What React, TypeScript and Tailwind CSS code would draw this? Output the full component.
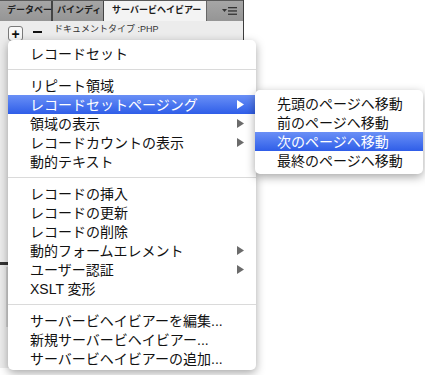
import React from "react";

type Item = { label: string; arrow?: boolean; active?: boolean } | "sep";

const mainItems: Item[] = [
  { label: "レコードセット" },
  "sep",
  { label: "リピート領域" },
  { label: "レコードセットページング", arrow: true, active: true },
  { label: "領域の表示", arrow: true },
  { label: "レコードカウントの表示", arrow: true },
  { label: "動的テキスト" },
  "sep",
  { label: "レコードの挿入" },
  { label: "レコードの更新" },
  { label: "レコードの削除" },
  { label: "動的フォームエレメント", arrow: true },
  { label: "ユーザー認証", arrow: true },
  { label: "XSLT 変形" },
  "sep",
  { label: "サーバービヘイビアーを編集..." },
  { label: "新規サーバービヘイビアー..." },
  { label: "サーバービヘイビアーの追加..." },
];

const subItems = [
  { label: "先頭のページへ移動" },
  { label: "前のページへ移動" },
  { label: "次のページへ移動", active: true },
  { label: "最終のページへ移動" },
];

function Arrow({ white }: { white?: boolean }) {
  return (
    <svg width="7" height="9" viewBox="0 0 7 9" className="shrink-0">
      <polygon points="0,0 7,4.5 0,9" fill={white ? "#ffffff" : "#6b6b6b"} />
    </svg>
  );
}

function Row({ label, arrow, active }: { label: string; arrow?: boolean; active?: boolean }) {
  return (
    <div
      className={
        "flex h-[19px] items-center justify-between pl-[22px] pr-[12px] text-[14px] leading-none " +
        (active
          ? "bg-gradient-to-b from-[#6a8ff6] to-[#2f5de8] text-white"
          : "text-[#111]")
      }
    >
      <span>{label}</span>
      {arrow && <Arrow white={active} />}
    </div>
  );
}

export default function App() {
  return (
    <div className="relative w-[425px] h-[375px] overflow-hidden bg-white font-['Liberation_Sans','Noto_Sans_CJK_JP',sans-serif]">
      {/* Panel behind the menu */}
      <div className="flex h-[368px] w-[244px] flex-col border-r border-[#3d3d3d] bg-[#ececec]">
        {/* Tabs */}
        <div className="flex h-[21px] items-stretch border-t border-[#5a5a5a] bg-gradient-to-b from-[#a6a6a6] to-[#959595] text-[9px] font-semibold text-[#222]">
          <div className="flex w-[53px] items-center whitespace-nowrap border-r-2 border-[#444] pl-[7px]">
            データベー
          </div>
          <div className="flex w-[51px] items-center whitespace-nowrap border-r border-[#444] pl-[4px]">
            バインディ
          </div>
          <div className="flex w-[102px] items-center whitespace-nowrap bg-[#f3f3f3] pl-[8px] text-[#1a1a1a]">
            サーバービヘイビアー
          </div>
          <div className="flex flex-1 items-center justify-end border-l border-[#666] pr-[5px]">
            <svg width="16" height="10" viewBox="0 0 16 10">
              <polygon points="0,3 5,3 2.5,6" fill="#333" />
              <rect x="6" y="1" width="9" height="1.3" fill="#333" />
              <rect x="6" y="4.3" width="9" height="1.3" fill="#333" />
              <rect x="6" y="7.6" width="9" height="1.3" fill="#333" />
            </svg>
          </div>
        </div>
        {/* Toolbar */}
        <div className="flex h-[19px] items-start pl-[8px] pt-[5px]">
          <div className="flex h-[15px] w-[15px] items-center justify-center rounded-[3px] border border-[#7a7a7a] bg-[#f8f8f8] text-[14px] font-bold leading-none text-[#111]">
            +
          </div>
          <div className="ml-[10px] mt-[5px] h-[2px] w-[9px] bg-[#111]" />
          <div className="ml-[12px] mt-[-3px] text-[9px] text-[#333]">ドキュメントタイプ :PHP</div>
        </div>
        <div className="mt-[222px] h-[3px] w-full bg-[#333]" />
        <div className="ml-[6px] mt-[2px] h-[60px] w-[2px] bg-[#d0d0d0]" />
      </div>

      {/* Main menu */}
      <div className="absolute left-[8px] top-[40px] w-[248px] rounded-[5px] bg-white pb-[2px] pt-[4px] shadow-[0_3px_10px_rgba(0,0,0,0.35)]">
        {mainItems.map((it, i) =>
          it === "sep" ? (
            <div key={i} className="flex h-[13px] items-center">
              <div className="h-px w-full bg-[#dadada]" />
            </div>
          ) : (
            <Row key={i} label={it.label} arrow={it.arrow} active={it.active} />
          )
        )}
      </div>

      {/* Submenu */}
      <div className="absolute left-[255px] top-[90px] w-[168px] rounded-[5px] bg-white py-[4px] shadow-[0_3px_10px_rgba(0,0,0,0.35)]">
        {subItems.map((it, i) => (
          <Row key={i} label={it.label} active={it.active} />
        ))}
      </div>
    </div>
  );
}
